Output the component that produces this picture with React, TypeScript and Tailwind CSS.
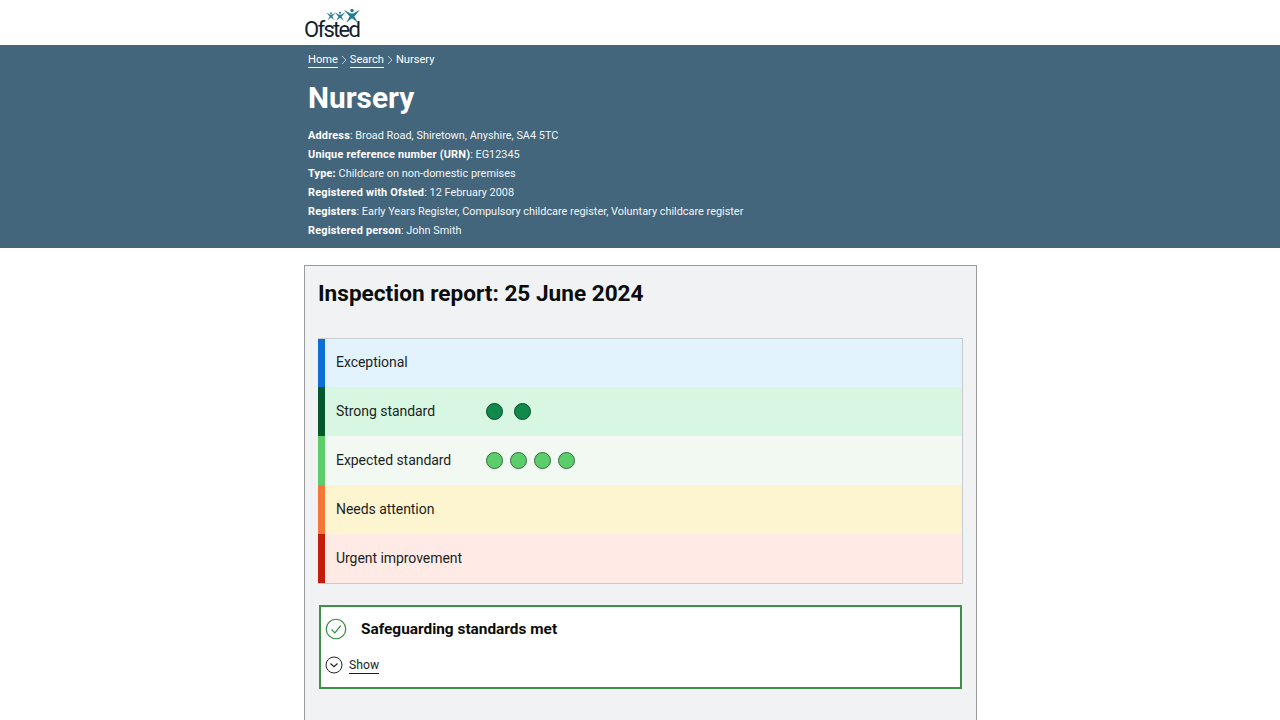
import * as React from 'react'

const details = [
  { label: 'Address', text: ': Broad Road, Shiretown, Anyshire, SA4 5TC' },
  { label: 'Unique reference number (URN)', text: ': EG12345' },
  { label: 'Type:', text: ' Childcare on non-domestic premises' },
  { label: 'Registered with Ofsted', text: ': 12 February 2008' },
  { label: 'Registers', text: ': Early Years Register, Compulsory childcare register, Voluntary childcare register' },
  { label: 'Registered person', text: ': John Smith' },
]

function Star({ x, y, s }: { x: number; y: number; s: number }) {
  // little figure-like star of the logo
  return (
    <g transform={`translate(${x} ${y}) scale(${s})`} fill="#1f7f96">
      <circle cx="0" cy="-3.8" r="1.3" />
      <path d="M-6.2-4.4 L-1-1.6 L1-1.6 L6.2-4.4 L1.8 0.8 L4.6 5.6 L0 2.2 L-4.6 5.6 L-1.8 0.8 Z" />
    </g>
  )
}

function Chevron() {
  return (
    <svg width="12" height="10" viewBox="0 0 12 10" fill="none" stroke="#c9d5dd" strokeWidth="0.9" className="mt-[3px]">
      <path d="M4 1 L8 5 L4 9" />
    </svg>
  )
}

function Logo() {
  return (
    <div className="flex flex-col items-end w-[57px]">
      <svg width="34" height="13" viewBox="0 0 34 13" className="-mb-[3px] relative mr-[1px]">
        <Star x={5} y={7} s={0.72} />
        <Star x={14} y={7} s={0.85} />
        <Star x={26} y={6.5} s={1.3} />
      </svg>
      <span className="w-full text-[22px] leading-[22px] text-[#11202c] tracking-[-1.7px] font-['Roboto',sans-serif]">Ofsted</span>
    </div>
  )
}

function Dot({ dark }: { dark?: boolean }) {
  return (
    <span
      className={
        dark
          ? 'w-[17px] h-[17px] rounded-full border border-[#0b4a2a] bg-[#0f8a4c]'
          : 'w-[17px] h-[17px] rounded-full border border-[#2f6e3f] bg-[#5dcc6b]'
      }
    />
  )
}

function Row({ label, bar, bg, h = 'h-[49px]', nudge = '', children }: { label: string; bar: string; bg: string; h?: string; nudge?: string; children?: React.ReactNode }) {
  return (
    <div className={`flex ${h} ${bg}`}>
      <div className={`w-[7px] ${bar}`} />
      <div className={`w-[161px] pl-[11px] self-center text-[14px] text-[#1b1f22] tracking-[-0.05px] ${nudge}`}>{label}</div>
      {children}
    </div>
  )
}

export default function App() {
  return (
    <div className="h-[720px] overflow-hidden bg-white font-['Roboto',sans-serif]">
      <header className="h-[45px] pl-[304px] pt-[9px]">
        <Logo />
      </header>

      <section className="h-[203px] bg-[#44667c] pl-[308px] text-white">
        <nav className="flex items-start pt-[7px] text-[11.1px] leading-[15px]">
          <a className="border-b border-white">Home</a>
          <Chevron />
          <a className="border-b border-white">Search</a>
          <Chevron />
          <span>Nursery</span>
        </nav>
        <h1 className="mt-[10px] text-[29.8px] leading-[40px] font-bold">Nursery</h1>
        <dl className="mt-[8px] text-[10.9px] leading-[19px] text-[#f2f5f7]">
          {details.map((d) => (
            <div key={d.label}>
              <strong className="font-bold text-white tracking-[0.2px]">{d.label}</strong>
              {d.text}
            </div>
          ))}
        </dl>
      </section>

      <main className="ml-[304px] mt-[17px] w-[673px] border border-[#9b9b9b] bg-[#f0f2f4] px-[13px] pt-[13px] h-[500px]">
        <h2 className="text-[22.6px] leading-[30px] font-bold text-[#0b0c0c]">Inspection report: 25 June 2024</h2>

        <div className="mt-[29px] border-t border-r border-b border-[#c8ccd0]">
          <Row label="Exceptional" bar="bg-[#0b6fd6]" bg="bg-[#e3f3fe]" h="h-[48px]" nudge="mb-[2px]" />
          <Row label="Strong standard" bar="bg-[#03572c]" bg="bg-[#d8f7e3]">
            <div className="flex items-center gap-[11px]">
              <Dot dark />
              <Dot dark />
            </div>
          </Row>
          <Row label="Expected standard" bar="bg-[#5dcc6b]" bg="bg-[#f2f9f3]">
            <div className="flex items-center gap-[7px]">
              <Dot />
              <Dot />
              <Dot />
              <Dot />
            </div>
          </Row>
          <Row label="Needs attention" bar="bg-[#f47738]" bg="bg-[#fdf5d0]" />
          <Row label="Urgent improvement" bar="bg-[#c41c0a]" bg="bg-[#ffeae6]" />
        </div>

        <div className="mt-[21px] mx-px h-[84px] border-2 border-[#3d8f4a] bg-white pl-[4px] pt-[11px]">
          <div className="flex items-center gap-[14px] h-[22px]">
            <svg width="22" height="22" viewBox="0 0 22 22" fill="none" stroke="#2f8a3c">
              <circle cx="11" cy="11" r="9.75" strokeWidth="1.2" />
              <path d="M6.5 11.5 L9.8 14.8 L15.8 7.6" strokeWidth="1.2" />
            </svg>
            <span className="mt-[1px] text-[15.4px] font-bold text-[#0b0c0c]">Safeguarding standards met</span>
          </div>
          <div className="mt-[15px] flex items-center gap-[6px]">
            <svg width="18" height="18" viewBox="0 0 18 18" fill="none" stroke="#222">
              <circle cx="9" cy="9" r="8" strokeWidth="1" />
              <path d="M5.5 7.5 L9 10.8 L12.5 7.5" strokeWidth="1.2" />
            </svg>
            <a className="mt-[2px] text-[12.2px] leading-[16px] text-[#1b1f22] border-b border-[#1b1f22]">Show</a>
          </div>
        </div>
      </main>
    </div>
  )
}
